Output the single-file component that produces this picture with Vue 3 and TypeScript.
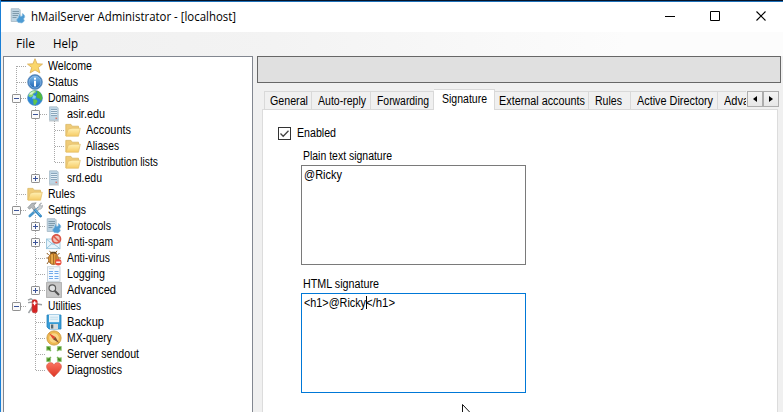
<script setup lang="ts">
import { type Directive } from 'vue'

interface TreeItem {
  label: string
  icon: string
  level: number
  width: number
  expander?: '+' | '-'
}

interface Tab {
  label: string
  width: number
  text: number
  active?: boolean
}

const items: TreeItem[] = [
  { label: 'Welcome', icon: 'star', level: 0, width: 44 },
  { label: 'Status', icon: 'info', level: 0, width: 30 },
  { label: 'Domains', icon: 'globe', level: 0, width: 41, expander: '-' },
  { label: 'asir.edu', icon: 'server', level: 1, width: 38, expander: '-' },
  { label: 'Accounts', icon: 'folder', level: 2, width: 45 },
  { label: 'Aliases', icon: 'folder', level: 2, width: 33 },
  { label: 'Distribution lists', icon: 'folder', level: 2, width: 72 },
  { label: 'srd.edu', icon: 'server', level: 1, width: 35, expander: '+' },
  { label: 'Rules', icon: 'folder', level: 0, width: 27 },
  { label: 'Settings', icon: 'tools', level: 0, width: 38, expander: '-' },
  { label: 'Protocols', icon: 'protocol', level: 1, width: 44, expander: '+' },
  { label: 'Anti-spam', icon: 'spam', level: 1, width: 46, expander: '+' },
  { label: 'Anti-virus', icon: 'bug', level: 1, width: 43 },
  { label: 'Logging', icon: 'log', level: 1, width: 38 },
  { label: 'Advanced', icon: 'search', level: 1, width: 49, expander: '+' },
  { label: 'Utilities', icon: 'knife', level: 0, width: 33, expander: '-' },
  { label: 'Backup', icon: 'disk', level: 1, width: 37 },
  { label: 'MX-query', icon: 'compass', level: 1, width: 45 },
  { label: 'Server sendout', icon: 'arrows', level: 1, width: 72 },
  { label: 'Diagnostics', icon: 'heart', level: 1, width: 55 },
]

const tabs: Tab[] = [
  { label: 'General', width: 48, text: 38 },
  { label: 'Auto-reply', width: 59, text: 48 },
  { label: 'Forwarding', width: 63, text: 52 },
  { label: 'Signature', width: 61, text: 45, active: true },
  { label: 'External accounts', width: 94, text: 86 },
  { label: 'Rules', width: 42, text: 27 },
  { label: 'Active Directory', width: 87, text: 76 },
  { label: 'Advanced', width: 62, text: 49 },
]

// Condenses a label so that it fills the given number of pixels.
const vFit: Directive<HTMLElement, number> = {
  mounted(el, { value }) {
    const natural = el.getBoundingClientRect().width
    el.style.transform = `scaleX(${value / natural})`
    el.style.marginRight = `${value - natural}px`
  },
}
</script>

<template>
  <svg class="defs" width="0" height="0">
    <defs>
      <linearGradient id="gold" x2="0" y2="1"><stop stop-color="#fff0b4" /><stop offset="1" stop-color="#f6cb64" /></linearGradient>
      <linearGradient id="blue" x2="0" y2="1"><stop stop-color="#7db9ea" /><stop offset="1" stop-color="#1f65b4" /></linearGradient>
      <linearGradient id="red" x2="0" y2="1"><stop stop-color="#fb7560" /><stop offset="1" stop-color="#dc3424" /></linearGradient>
      <symbol id="star" viewBox="0 0 16 16">
        <path d="M8 .7 10.1 5.8 15.5 6.1 11.3 9.5 12.9 15 8 12 3.1 15 4.7 9.5.5 6.1 5.9 5.8Z" fill="#fad66b" stroke="#d8ac55" stroke-width=".8" />
      </symbol>
      <symbol id="info" viewBox="0 0 16 16">
        <circle cx="8" cy="8" r="7.4" fill="#2f74bd" stroke="#7398bd" stroke-width=".8" />
        <circle cx="8" cy="8" r="6" fill="url(#blue)" stroke="#a9cdec" stroke-width=".6" />
        <rect x="7" y="3.7" width="2" height="2" fill="#fff" /><rect x="7" y="6.7" width="2" height="5.7" fill="#fff" />
      </symbol>
      <symbol id="globe" viewBox="0 0 16 16">
        <circle cx="8" cy="8" r="7.5" fill="#2b86d6" stroke="#5a98c8" stroke-width=".6" />
        <path d="M1.2 6C2.5 2 6 .2 9 .7L8.5 3 6.5 3.5 6 6 3.5 7.5Z" fill="#8cd66a" />
        <path d="M9.5.8C13 1.3 15.5 4.5 15.3 8.5L14 11 12.4 8.5 10 8 9 5.5 10.5 3.5Z" fill="#52b93f" />
        <path d="M6.2 9 9.8 9.8 10.5 11.5 8.2 15 6.5 14.5Z" fill="#62c64b" />
        <path d="M2 4.5C3.5 2 6 1 8 1.3L4.5 4.7Z" fill="#d6f2d0" /><path d="M6.5 5 9 6.2 8.4 8.8 5 8.4Z" fill="#86d0f7" />
      </symbol>
      <symbol id="server" viewBox="0 0 16 16">
        <path d="M3.5.8H11l1.2 1.2v12.2H3.5Z" fill="#bed5e4" stroke="#a3b8c6" stroke-width=".7" />
        <path d="M5 3.5h6M5 5.5h6M5 7.5h6M5 9.5h6" stroke="#83a0b5" stroke-width=".9" />
        <path d="M5 4.5h6M5 6.5h6M5 8.5h6" stroke="#edf5fa" stroke-width=".8" /><rect x="9.5" y="11.6" width="1.6" height="1.5" fill="#df7566" />
        <path d="M3 15h10" stroke="#a8b0b5" stroke-width=".7" />
      </symbol>
      <symbol id="folder" viewBox="0 0 16 16">
        <path d="M.8 14V2.4H6l1.2 1.8h6.3V7" fill="#efcb78" stroke="#d9b763" stroke-width=".8" />
        <path d="M1 14.2 3.2 7.2 7 6.2H15.3L13.5 14.2Z" fill="url(#gold)" stroke="#e3bd68" stroke-width=".7" />
      </symbol>
      <symbol id="tools" viewBox="0 0 16 16">
        <path d="M11.5 6 2.8 14" stroke="#4a98cc" stroke-width="2.6" stroke-linecap="round" />
        <path d="m10.5 6 1.5-1.5C12 2.5 12.8 1.2 14.6 1L13 2.9l.9 1.3L15.6 3.3C15.7 6 13.8 7.6 12.2 7.3L8.2 11 6.3 9.4Z" fill="#cfd3d6" stroke="#93999e" stroke-width=".6" />
        <path d="m7.6 7.6 6 6.5" stroke="#2f85c2" stroke-width="2.7" stroke-linecap="round" />
        <path d="m7.8 7.3 5.5 6" stroke="#8bd1ef" stroke-width=".9" />
        <path d="M.8 5.6 4.8 1.3 9.2.8 7 3.2 8.4 6.7 6.8 8 4.4 5.6 2.4 7.2Z" fill="#b4b8bb" stroke="#7e8488" stroke-width=".6" />
      </symbol>
      <symbol id="protocol" viewBox="0 0 16 16">
        <path d="M1.2.7H9l1.2 1.2v11.6H1.2Z" fill="#bfd4e2" stroke="#9db1be" stroke-width=".7" />
        <path d="M2.5 3.5H9M2.5 5.5H9M2.5 7.5H8M2.5 9.5H6.5" stroke="#7894a6" stroke-width=".9" />
        <path d="M9.6 6.3 10.4 8.4 12.3 8 12.3 5.6C15 6.7 15.5 9.3 13.6 10.8L14.4 13 12 15 8 14.4 6.5 12 8.4 9.5Z" fill="#4d9bd3" stroke="#85bbdd" stroke-width=".6" />
      </symbol>
      <symbol id="spam" viewBox="0 0 16 16">
        <rect x=".5" y="5" width="13.5" height="9.7" fill="#e8f5fc" stroke="#8ebed7" stroke-width=".8" />
        <path d="m1 14 5.5-5 7 5.3M1 5.5l6 5 6-5" fill="none" stroke="#84b9d5" stroke-width=".8" />
        <circle cx="10.4" cy="4.9" r="4.1" fill="#f3c4b8" stroke="#d95747" stroke-width="1.7" /><path d="m7.7 2.3 5.5 5.3" stroke="#df604f" stroke-width="1.7" />
      </symbol>
      <symbol id="bug" viewBox="0 0 16 16">
        <path d="M2.7 5 .8 3M3 8H.3M3 11 1 14M11.5 5l2-2M12 8h3M5 3 3.5.8M9.5 3 11 .8" stroke="#8d5b20" stroke-width="1" />
        <path d="M3.8 4.3 5.5 1.8h4l1.8 2.5Z" fill="#5e431f" />
        <ellipse cx="7.4" cy="8.9" rx="5" ry="5.7" fill="#e09a3a" stroke="#93581c" stroke-width=".7" />
        <path d="M7.4 4v10.5M4.8 5.2v8M10 5.2v8" stroke="#84531e" stroke-width=".7" /><path d="M6 5v8" stroke="#ffcc6a" stroke-width=".8" />
        <circle cx="12.3" cy="12.2" r="3.2" fill="#e84d3c" /><path d="M10.2 12.2h4.2" stroke="#fff" stroke-width="1.4" />
      </symbol>
      <symbol id="log" viewBox="0 0 16 16">
        <rect x="1.5" y=".8" width="12.5" height="14.5" fill="#f4f9fe" stroke="#bcc8d1" stroke-width=".8" />
        <path d="M3 5.5h4M3 7.5h4M3 10.5h4M3 12.5h4M8.5 5.5h4M8.5 7.5h4M8.5 10.5h4M8.5 12.5h4" stroke="#71a9eb" stroke-width="1.2" /><path d="M3 2.7h5" stroke="#cad4dc" />
      </symbol>
      <symbol id="search" viewBox="0 0 16 16">
        <rect x=".6" y=".6" width="14.8" height="14.8" fill="#c9c9c9" stroke="#b0b0b0" /><path d="m8.7 8.7 4.3 4.3" stroke="#505050" stroke-width="2" />
        <circle cx="6.3" cy="6.2" r="3.3" fill="#e0e2e3" stroke="#5a5a5a" stroke-width="1.2" />
      </symbol>
      <symbol id="knife" viewBox="0 0 16 16">
        <path d="M1 2.1 4 .8 7 3M1 4.6 6 4M1.5 15 6 8M4 12.5 6.5 7M10 6l5 .8" fill="none" stroke="#9da1a4" stroke-width="1.4" />
        <rect x="5.2" y="1.8" width="5" height="13" rx="1.8" fill="#d82424" stroke="#ae2420" stroke-width=".6" /><path d="M7.6 3.2v4M5.7 5.2h3.8" stroke="#fff" stroke-width="1.3" />
      </symbol>
      <symbol id="disk" viewBox="0 0 16 16">
        <path d="M1 1h14v14H3L1 13Z" fill="#389cd6" stroke="#2783bd" stroke-width=".8" /><rect x="3" y="1" width="10.2" height="7.2" fill="#eaf5fb" />
        <path d="M4.2 3.2h7.8M4.2 5.2h7.8" stroke="#acd2e5" stroke-width=".7" /><rect x="4" y="10" width="8" height="5" fill="#d7dadb" /><rect x="5" y="10.5" width="2.3" height="4" fill="#586871" />
      </symbol>
      <symbol id="compass" viewBox="0 0 16 16">
        <circle cx="8" cy="8" r="7.1" fill="#f2bd55" stroke="#c9963b" stroke-width=".9" /><circle cx="8" cy="8" r="5.4" fill="#f9d587" stroke="#edb54c" stroke-width="1.1" />
        <path d="m3 3.3 6.5 3.6-2.4 2.3Z" fill="#e24731" /><path d="m13 13-6-3.7 2.5-2.4Z" fill="#834f2c" />
      </symbol>
      <symbol id="arrows" viewBox="0 0 16 16">
        <path d="M.5.3H4.6V3.4L5.2 4.6 4.2 5.2 3 4.2.5 4.6ZM15.5.3H11.4V3.4L10.8 4.6 11.8 5.2 13 4.2 15.5 4.6ZM.5 15.7H4.6V12.6L5.2 11.4 4.2 10.8 3 11.8.5 11.4ZM15.5 15.7H11.4V12.6L10.8 11.4 11.8 10.8 13 11.8 15.5 11.4Z" fill="#6cae45" stroke="#9bc784" stroke-width=".4" />
        <path d="m1.5 1.3 2.5 2M14.5 1.3l-2.5 2M1.5 14.7l2.5-2M14.5 14.7l-2.5-2" stroke="#41891e" stroke-width="1.5" />
      </symbol>
      <symbol id="heart" viewBox="0 0 16 16">
        <path d="M8 3C9 .5 12-.1 14 1.5 17 4.3 14.8 7.6 12.7 10L8 15 3.3 10C1.2 7.6-1 4.3 2 1.5 4-.1 7 .5 8 3Z" fill="url(#red)" stroke="#d45b4d" stroke-width=".6" />
      </symbol>
    </defs>
  </svg>
  <div class="window">
    <header class="titlebar">
      <svg class="app-icon" width="16" height="16"><use href="#protocol" /></svg>
      <span v-fit="205" class="text">hMailServer Administrator - [localhost]</span>
      <svg class="controls" width="103" height="12" viewBox="0 0 103 12" fill="none" stroke="#000">
        <path d="M0 5.5h10M45.5.5h9v9h-9z" /><path d="m91.5.5 9 9m0-9-9 9" stroke-width="1.1" />
      </svg>
    </header>
    <nav class="menu"><span v-fit="19" class="text">File</span><span v-fit="25" class="text">Help</span></nav>
    <main class="body">
      <aside class="tree">
        <svg class="guides" width="80" height="330" fill="none" stroke="#a8a8a8" stroke-dasharray="1 1">
          <path d="M12.5 9v240M31.5 46v76M50.5 62v44M31.5 158v76M31.5 254v60" />
          <path d="M13 9.5h10M13 25.5h10M13 41.5h10M32 57.5h12M51 73.5h10M51 89.5h10M51 105.5h10M32 121.5h12M13 137.5h10M13 153.5h10M32 169.5h10M32 185.5h10M32 201.5h10M32 217.5h10M32 233.5h10M13 249.5h10M32 265.5h10M32 281.5h10M32 297.5h10M32 313.5h10" />
        </svg>
        <div v-for="item in items" :key="item.label" class="row" :class="`level-${item.level}`">
          <svg v-if="item.expander" class="expander" width="9" height="9">
            <rect x=".5" y=".5" width="8" height="8" rx=".6" fill="#fafafa" stroke="#919191" />
            <path :d="item.expander === '+' ? 'M2 4.5h5M4.5 2v5' : 'M2 4.5h5'" stroke="#3c5499" />
          </svg>
          <span v-else class="expander"></span>
          <svg class="icon" width="16" height="16"><use :href="`#${item.icon}`" /></svg>
          <span v-fit="item.width" class="text">{{ item.label }}</span>
        </div>
      </aside>
      <section class="content">
        <div class="banner"></div>
        <div class="tabstrip">
          <div class="tabs">
            <div v-for="tab in tabs" :key="tab.label" class="tab" :class="{ active: tab.active }" :style="{ width: `${tab.width}px` }">
              <span v-fit="tab.text" class="text">{{ tab.label }}</span>
            </div>
          </div>
          <div class="scroller">
            <button type="button"><svg width="4" height="6"><path d="M4 0v6L0 3Z" /></svg></button>
            <button type="button"><svg width="4" height="6"><path d="M0 0v6l4-3Z" /></svg></button>
          </div>
        </div>
        <div class="page">
          <div class="check">
            <svg width="13" height="13" fill="none"><rect x=".5" y=".5" width="12" height="12" stroke="#333" /><path d="m2.5 6.5 2.7 2.8 5.3-5.5" stroke="#444" stroke-width="1.3" /></svg>
            <span v-fit="39" class="text">Enabled</span>
          </div>
          <div class="label"><span v-fit="89" class="text">Plain text signature</span></div>
          <div class="box"><span v-fit="38" class="text">@Ricky</span></div>
          <div class="label second"><span v-fit="76" class="text">HTML signature</span></div>
          <div class="box focused"><span v-fit="62" class="text">&lt;h1&gt;@Ricky</span><i class="caret"></i><span v-fit="29" class="text">&lt;/h1&gt;</span></div>
        </div>
      </section>
    </main>
    <svg class="pointer" width="12" height="19"><path d="M.5.5v16l3.7-3.7 2.5 5.5 2-1-2.4-5.2H11.5Z" fill="#fff" stroke="#111" /></svg>
  </div>
</template>

<style>
body { margin: 0; overflow: hidden; }
</style>

<style scoped>
* { box-sizing: border-box; }
.defs { position: absolute; }
.window {
  position: relative; display: flex; flex-direction: column;
  width: 783px; height: 412px; overflow: hidden;
  border-left: 1px solid #1a7fd6; background: #f0f0f0;
  color: #000; font: 12px/16px "Liberation Sans", Arial, sans-serif; white-space: nowrap;
}
.titlebar {
  display: flex; align-items: center; flex: none; height: 32px; padding: 0 15px 0 9px;
  border-top: 1px solid #051329; background: #fff; box-shadow: inset 0 1px #1d70b8;
  font: 12px/16px "Open Sans", "Noto Sans", sans-serif;
}
.app-icon { margin: -2px 5px 0 0; }
.controls { margin: 1px 0 0 auto; }
.menu {
  display: flex; gap: 18px; flex: none; height: 24px; padding: 4px 0 0 15px;
  background: linear-gradient(90deg, #f0f0f0, #f3f3f3 35%, #fcfcfc 80%);
  font: 12px/16px "Open Sans", "Noto Sans", sans-serif;
}
.body { display: flex; flex: 1; min-height: 0; padding-left: 2px; }
.tree {
  position: relative; flex: none; width: 250px; padding-top: 1px; overflow: hidden;
  border: 1px solid #828790; border-bottom: 0; background: #fff;
}
.guides { position: absolute; left: 0; top: 0; }
.row { position: relative; display: flex; align-items: center; height: 16px; padding-left: 8px; }
.level-1 { padding-left: 27px; }
.level-2 { padding-left: 46px; }
.expander { flex: none; width: 9px; height: 9px; }
.icon { flex: none; margin: 0 5px 0 6px; }
.text { display: inline-block; flex: none; transform-origin: 0 50%; }
.content { display: flex; flex-direction: column; flex: 1; min-width: 0; padding-left: 4px; }
.banner { flex: none; width: 524px; height: 27px; border: 1px solid #676767; background: #e0e0e0; }
.tabstrip { position: relative; display: flex; align-items: flex-end; flex: none; height: 27px; margin: 0 0 -1px 7px; }
.tabs { display: flex; align-items: flex-end; width: 482px; height: 27px; overflow: hidden; }
.tab {
  flex: none; height: 19px; padding-left: 6px; line-height: 19px;
  border: 1px solid #d9d9d9; border-left-width: 0; background: #f0f0f0;
}
.tab:first-child { padding-left: 5px; border-left-width: 1px; }
.tab.active { height: 21px; padding-left: 8px; border-bottom: 0; background: #fff; line-height: 19px; }
.tab:nth-child(5) { padding-left: 4px; }
.scroller { display: flex; align-self: flex-start; margin: 8px 0 0 1px; }
.scroller button {
  display: flex; align-items: center; justify-content: center; width: 16px; height: 16px;
  padding: 0; border: 1px solid #adadad; background: linear-gradient(#f3f3f3, #e7e7e7);
}
.page { flex: 1; width: 516px; margin-left: 5px; padding: 14px 0 0 15px; border: 1px solid #dcdcdc; border-bottom: 0; background: #fff; }
.check { display: flex; align-items: center; gap: 6px; height: 18px; }
.label { height: 15px; margin: 6px 0 0 25px; }
.label.second { margin-top: 11px; }
.box { display: flex; width: 225px; height: 100px; margin: 2px 0 0 23px; padding: 1px 2px; border: 1px solid #7a7a7a; }
.box.focused { border-color: #0078d7; }
.caret { width: 1px; height: 13px; margin: 1px -1px 0 0; background: #000; }
.pointer { position: absolute; left: 461px; top: 404px; }
</style>
